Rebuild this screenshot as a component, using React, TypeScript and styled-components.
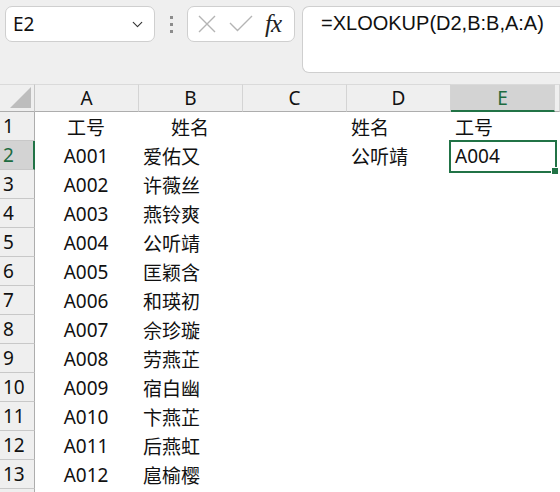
import React from 'react';
import styled, { createGlobalStyle } from 'styled-components';
import { ChevronDown } from 'lucide-react';

const GlobalStyle = createGlobalStyle`
  html, body {
    margin: 0;
    padding: 0;
    background: #efefef;
    overflow: hidden;
  }
  * {
    box-sizing: border-box;
  }
`;

const GREEN = '#217346';

const Window = styled.div`
  width: 560px;
  height: 492px;
  overflow: hidden;
  background: #efefef;
  font-family: 'Noto Sans', 'Noto Sans CJK SC', sans-serif;
  color: #111;
`;

const FormulaBar = styled.div`
  display: flex;
  align-items: flex-start;
  padding: 6px 0 0 5px;
  height: 84px;
`;

const Box = styled.div`
  background: #fff;
  border: 1px solid #cfcfcf;
  border-radius: 7px;
  display: flex;
  align-items: center;
`;

const NameBox = styled(Box)`
  width: 150px;
  height: 36px;
  padding: 0 8px 0 7px;
  justify-content: space-between;
  font-size: 19px;
`;

const Grip = styled.div`
  width: 32px;
  height: 36px;
  display: flex;
  flex-direction: column;
  align-items: center;
  justify-content: center;
  gap: 4px;
  span {
    width: 3px;
    height: 3px;
    background: #8c8c8c;
  }
`;

const FnBox = styled(Box)`
  width: 108px;
  height: 36px;
  padding: 0 6px 0 9px;
  gap: 12px;
`;

const Fx = styled.span`
  font-family: 'Liberation Serif', serif;
  font-style: italic;
  font-size: 25px;
  line-height: 1;
  margin-top: -2px;
  letter-spacing: -1px;
  color: #222;
`;

const FormulaInput = styled(Box)`
  margin-left: 7px;
  flex: 1;
  height: 67px;
  border-right: none;
  border-top-right-radius: 0;
  border-bottom-right-radius: 0;
  align-items: flex-start;
  padding: 5px 0 0 18px;
  font-family: 'Liberation Sans', Arial, sans-serif;
  font-size: 20px;
  color: #111;
`;

const Sheet = styled.div`
  display: grid;
  grid-template-columns: 35px repeat(5, 104px) 1fr;
  grid-auto-rows: 29px;
  grid-template-rows: 28px;
  background: #fff;
  font-size: 19px;
`;

const Corner = styled.div`
  background: #efefef;
  border-right: 1px solid #c6c6c6;
  border-bottom: 1px solid #adadad;
  border-top: 1px solid #dadada;
  display: flex;
  align-items: flex-end;
  justify-content: flex-end;
  padding: 0 3px 3px 0;
`;

const ColHead = styled.div<{ $active?: boolean }>`
  background: ${(p) => (p.$active ? '#d3d3d3' : '#efefef')};
  color: ${(p) => (p.$active ? '#1d6b40' : '#111')};
  border-top: 1px solid #dadada;
  border-right: 1px solid #d4d4d4;
  border-bottom: ${(p) => (p.$active ? `2px solid ${GREEN}` : '1px solid #adadad')};
  display: flex;
  align-items: center;
  justify-content: center;
  font-size: 19px;
`;

const RowHead = styled.div<{ $active?: boolean }>`
  background: ${(p) => (p.$active ? '#d3d3d3' : '#efefef')};
  color: ${(p) => (p.$active ? '#1d6b40' : '#111')};
  border-right: ${(p) => (p.$active ? `2px solid ${GREEN}` : '1px solid #adadad')};
  border-bottom: 1px solid #c8c8c8;
  display: flex;
  align-items: center;
  padding-left: 3px;
  font-size: 19px;
`;

const Cell = styled.div<{ $align?: 'left' | 'center' }>`
  position: relative;
  display: flex;
  align-items: center;
  justify-content: ${(p) => (p.$align === 'center' ? 'center' : 'flex-start')};
  padding-left: ${(p) => (p.$align === 'center' ? '0' : '4px')};
  padding-right: ${(p) => (p.$align === 'center' ? '2px' : '0')};
  white-space: nowrap;
`;

const Selection = styled.div`
  position: absolute;
  left: -2px;
  top: -1px;
  right: -2px;
  bottom: -3px;
  border: 2px solid ${GREEN};
  pointer-events: none;
  &::after {
    content: '';
    position: absolute;
    right: -4px;
    bottom: -4px;
    width: 6px;
    height: 6px;
    background: ${GREEN};
    border: 1px solid #fff;
  }
`;

const staff = [
  ['A001', '爱佑又'],
  ['A002', '许薇丝'],
  ['A003', '燕铃爽'],
  ['A004', '公听靖'],
  ['A005', '匡颖含'],
  ['A006', '和瑛初'],
  ['A007', '佘珍璇'],
  ['A008', '劳燕芷'],
  ['A009', '宿白幽'],
  ['A010', '卞燕芷'],
  ['A011', '后燕虹'],
  ['A012', '扈榆樱'],
  ['', ''],
];

const columns = ['A', 'B', 'C', 'D', 'E', ''];

const CrossIcon = () => (
  <svg width="20" height="20" viewBox="0 0 20 20">
    <path d="M2 2 L18 18 M18 2 L2 18" stroke="#b4b4b4" strokeWidth="1.4" fill="none" />
  </svg>
);

const CheckIcon = () => (
  <svg width="24" height="18" viewBox="0 0 24 18">
    <path d="M1 8 L8.5 15.5 L23 1" stroke="#b4b4b4" strokeWidth="1.4" fill="none" />
  </svg>
);

const App = () => {
  const rows = [
    ['工号', '姓名', '', '姓名', '工号'],
    ...staff.map(([id, name], i) => (i === 0 ? [id, name, '', '公听靖', 'A004'] : [id, name, '', '', ''])),
  ];
  const lastRow = rows.length - 1;

  return (
    <Window>
      <GlobalStyle />
      <FormulaBar>
        <NameBox>
          <span>E2</span>
          <ChevronDown size={17} strokeWidth={1.6} color="#333" />
        </NameBox>
        <Grip>
          <span />
          <span />
          <span />
        </Grip>
        <FnBox>
          <CrossIcon />
          <CheckIcon />
          <Fx>fx</Fx>
        </FnBox>
        <FormulaInput>=XLOOKUP(D2,B:B,A:A)</FormulaInput>
      </FormulaBar>

      <Sheet>
        <Corner>
          <svg width="21" height="21" viewBox="0 0 21 21">
            <polygon points="21,0 21,21 0,21" fill="#bdbdbd" />
          </svg>
        </Corner>
        {columns.map((c, i) => (
          <ColHead key={i} $active={c === 'E'}>
            {c}
          </ColHead>
        ))}
        {rows.map((r, ri) => (
          <React.Fragment key={ri}>
            {/* the last row only peeks in under the window edge */}
            <RowHead $active={ri === 1}>{ri < lastRow ? ri + 1 : ''}</RowHead>
            {r.map((v, ci) => (
              <Cell key={ci} $align={ci === 0 || (ri === 0 && ci === 1) ? 'center' : 'left'}>
                {v}
                {ri === 1 && ci === 4 && <Selection />}
              </Cell>
            ))}
            <Cell />
          </React.Fragment>
        ))}
      </Sheet>
    </Window>
  );
};

export default App;
